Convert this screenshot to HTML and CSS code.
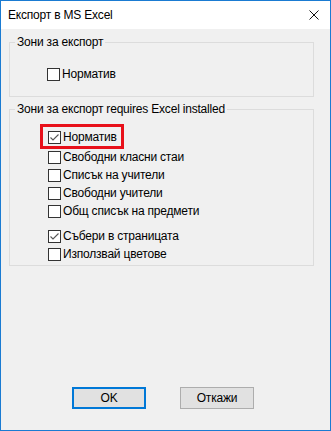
FILE: index.html
```html
<!DOCTYPE html>
<html lang="bg">
<head>
    <meta charset="UTF-8">
    <meta name="viewport" content="width=device-width, initial-scale=1.0">
    <title>Експорт в MS Excel</title>
    <link rel="stylesheet" href="styles.css">
</head>
<body>
    <div class="window">
        <div class="titlebar">
            <span class="title">Експорт в MS Excel</span>
            <svg class="close" width="10" height="10" viewBox="0 0 10 10">
                <path d="M0.5 0.5 L9.5 9.5 M9.5 0.5 L0.5 9.5" stroke="#111" stroke-width="1" fill="none"/>
            </svg>
        </div>

        <div class="client">
            <fieldset class="group group-top">
                <legend>Зони за експорт</legend>
                <label class="option"><span class="box"></span>Норматив</label>
            </fieldset>

            <fieldset class="group group-main">
                <legend>Зони за експорт requires Excel installed</legend>
                <label class="option highlight">
                    <span class="box">
                        <svg width="11" height="11" viewBox="0 0 11 11"><path d="M1.5 5.5 L4 8 L9.5 2.5" stroke="#555" stroke-width="1.1" fill="none"/></svg>
                    </span>Норматив
                </label>
                <label class="option"><span class="box"></span>Свободни класни стаи</label>
                <label class="option"><span class="box"></span>Списък на учители</label>
                <label class="option"><span class="box"></span>Свободни учители</label>
                <label class="option"><span class="box"></span>Общ списък на предмети</label>
                <label class="option spaced">
                    <span class="box">
                        <svg width="11" height="11" viewBox="0 0 11 11"><path d="M1.5 5.5 L4 8 L9.5 2.5" stroke="#555" stroke-width="1.1" fill="none"/></svg>
                    </span>Събери в страницата
                </label>
                <label class="option"><span class="box"></span>Използвай цветове</label>
            </fieldset>

            <div class="buttons">
                <button class="btn btn-default">OK</button>
                <button class="btn">Откажи</button>
            </div>
        </div>
    </div>
</body>
</html>
```

FILE: styles.css
```css
/* Windows 10 style dialog */
body {
    margin: 0;
    font-family: "Liberation Sans", "Noto Sans", sans-serif;
    font-size: 12px;
    letter-spacing: -0.2px;
    color: #000;
    background: #fff;
}

.window {
    width: 331px;
    height: 431px;
    box-sizing: border-box;
    border: 1px solid #1a7bd2;
    background: #f0f0f0;
    display: flex;
    flex-direction: column;
}

.titlebar {
    height: 28px;
    background: #fff;
    display: flex;
    align-items: center;
    padding-left: 7px;
}

.title {
    flex: 1;
    font-size: 12px;
}

.close {
    margin-right: 11px;
    margin-top: -1px;
}

.client {
    flex: 1;
    display: flex;
    flex-direction: column;
    padding: 5px 0 21px 8px;
}

.group {
    width: 305px;
    box-sizing: border-box;
    margin: 0;
    border: 1px solid #dcdcdc;
    min-inline-size: 0;
}

.group legend {
    padding: 0 2px;
    line-height: 16px;
    font-size: 12px;
}

.group-top {
    padding: 15px 0 13px 5px;
}

.group-top .option {
    margin-left: 32px;
}

.group-main {
    margin-top: 4px;
    padding: 7px 0 2px 5px;
}

.group-main .option {
    margin-left: 33px;
}

.option {
    display: flex;
    align-items: center;
    height: 18px;
    gap: 2px;
    line-height: 18px;
}

.box {
    width: 13px;
    height: 13px;
    box-sizing: border-box;
    border: 1px solid #333;
    background: #fff;
    display: flex;
    align-items: center;
    justify-content: center;
    flex-shrink: 0;
}

.group-main .option.highlight {
    width: 84px;
    height: 25px;
    box-sizing: border-box;
    border: 3px solid #e8101a;
    padding: 1px 0 0 5px;
    margin-left: 25px;
    margin-bottom: -1px;
}

.option.spaced {
    margin-top: 7px;
}

.buttons {
    margin-top: auto;
    display: flex;
    gap: 34px;
    padding-left: 63px;
}

.btn {
    width: 74px;
    height: 22px;
    box-sizing: border-box;
    border: 1px solid #adadad;
    background: #e1e1e1;
    font-family: "Liberation Sans", "Noto Sans", sans-serif;
    font-size: 12px;
    letter-spacing: -0.2px;
    color: #000;
    padding: 0;
}

.btn-default {
    border: 2px solid #0078d7;
}
```
